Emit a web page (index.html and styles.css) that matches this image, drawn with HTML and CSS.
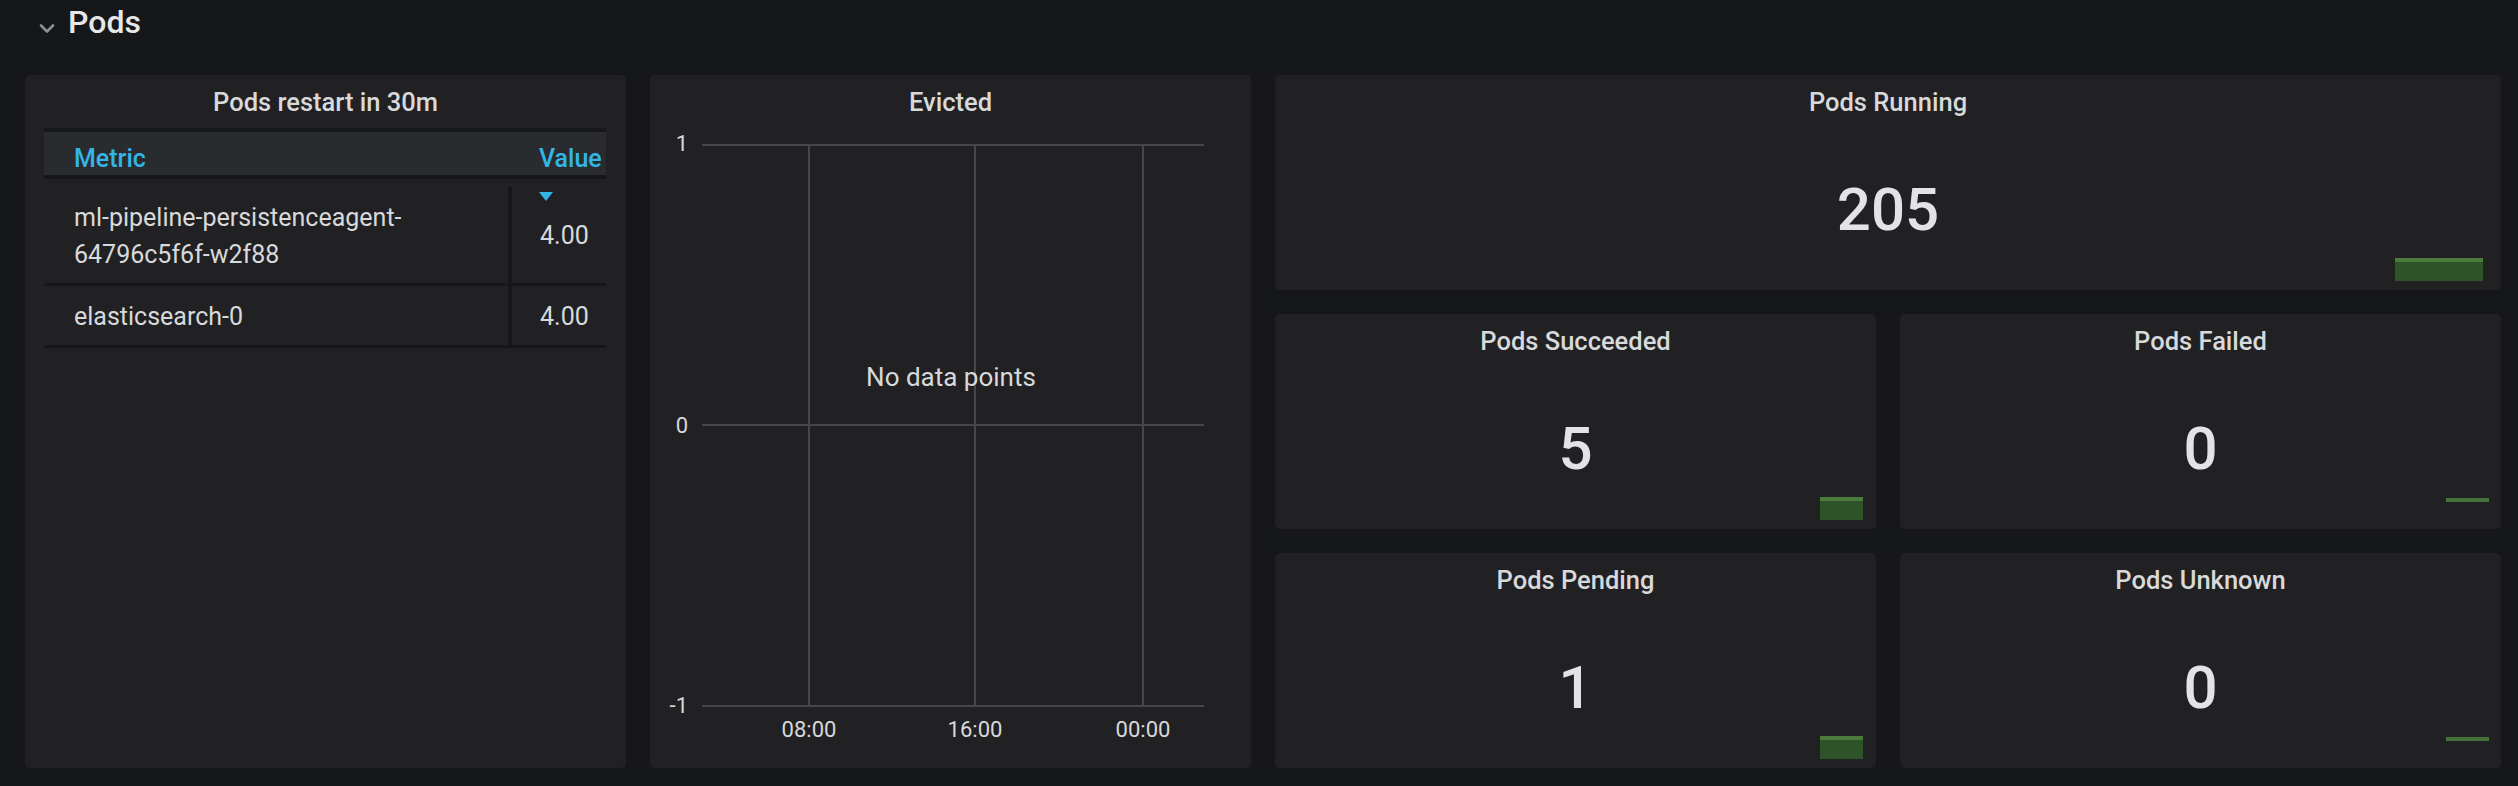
FILE: index.html
```html
<!DOCTYPE html>
<html lang="en">
<head>
<meta charset="utf-8">
<title>Pods</title>
<link rel="stylesheet" href="styles.css">
</head>
<body>
<div class="dash">
  <div class="row-header">
    <svg class="chev" width="16" height="12" viewBox="0 0 16 12"><path d="M2 3.5 L8 9.5 L14 3.5" fill="none" stroke="#8e8f92" stroke-width="2.6" stroke-linecap="round" stroke-linejoin="round"/></svg>
    <span class="row-title">Pods</span>
  </div>
  <div class="grid">
    <section class="panel p-table">
      <div class="panel-title">Pods restart in 30m</div>
      <div class="tbl">
        <div class="thead"><div class="th th-metric">Metric</div><div class="th th-val">Value</div></div>
        <div class="trow"><div class="td td-metric">ml-pipeline-persistenceagent-<wbr>64796c5f6f-w2f88</div><div class="td td-val"><span class="caret"></span>4.00</div></div>
        <div class="trow"><div class="td td-metric">elasticsearch-0</div><div class="td td-val">4.00</div></div>
      </div>
    </section>
    <section class="panel p-graph">
      <div class="panel-title">Evicted</div>
      <svg class="plot" width="601" height="651" viewBox="0 0 601 651">
        <g stroke="#47474b" stroke-width="2" fill="none">
          <path d="M52 28 H554 M52 308 H554 M52 589 H554"/>
          <path d="M159 28 V589 M325 28 V589 M493 28 V589"/>
        </g>
        <g class="axis" text-anchor="end">
          <text x="38" y="34">1</text>
          <text x="38" y="316">0</text>
          <text x="38" y="596">-1</text>
        </g>
        <g class="axis" text-anchor="middle">
          <text x="159" y="620">08:00</text>
          <text x="325" y="620">16:00</text>
          <text x="493" y="620">00:00</text>
        </g>
        <text class="nodata" x="301" y="269" text-anchor="middle">No data points</text>
      </svg>
    </section>
    <section class="panel stat stat-wide">
      <div class="panel-title">Pods Running</div>
      <div class="stat-value">205</div>
      <div class="spark spark-wide"></div>
    </section>
    <section class="panel stat">
      <div class="panel-title">Pods Succeeded</div>
      <div class="stat-value">5</div>
      <div class="spark"></div>
    </section>
    <section class="panel stat">
      <div class="panel-title">Pods Failed</div>
      <div class="stat-value">0</div>
      <div class="spark spark-flat"></div>
    </section>
    <section class="panel stat">
      <div class="panel-title">Pods Pending</div>
      <div class="stat-value">1</div>
      <div class="spark"></div>
    </section>
    <section class="panel stat">
      <div class="panel-title">Pods Unknown</div>
      <div class="stat-value">0</div>
      <div class="spark spark-flat"></div>
    </section>
  </div>
</div>
</body>
</html>
```

FILE: styles.css
```css
* { box-sizing: border-box; }
html, body {
  margin: 0;
  padding: 0;
  background: #161719;
}
body {
  font-family: Roboto, "Liberation Sans", sans-serif;
  color: #d8d9da;
  width: 2518px;
  height: 786px;
  overflow: hidden;
}
.dash { width: 2518px; }

.row-header {
  height: 75px;
  display: flex;
  align-items: flex-start;
  padding: 2px 0 0 39px;
}
.chev { margin-top: 20px; flex: none; }
.row-title {
  margin-left: 13px;
  font-size: 32px;
  line-height: 40px;
  font-weight: 500;
  color: #e6e7e8;
}

.grid {
  display: grid;
  grid-template-columns: repeat(4, 601px);
  grid-template-rows: repeat(3, 215px);
  gap: 24px;
  padding-left: 25px;
}
.panel {
  background: #212124;
  border-radius: 5px;
  position: relative;
  overflow: hidden;
}
.panel-title {
  padding-top: 12px;
  height: 42px;
  font-size: 25.5px;
  line-height: 30px;
  font-weight: 500;
  text-align: center;
  color: #d8d9da;
  white-space: nowrap;
}

.p-table { grid-column: 1; grid-row: 1 / 4; }
.p-graph { grid-column: 2; grid-row: 1 / 4; }
.stat-wide { grid-column: 3 / 5; grid-row: 1; }

/* table */
.tbl {
  margin: 11px 20px 0 19px;
  font-size: 25px;
}
.thead {
  display: grid;
  grid-template-columns: 468px 1fr;
  background: #2a2b2e;
  border-top: 4px solid #161719;
  border-bottom: 4px solid #161719;
  height: 51px;
  margin-bottom: 8px;
}
.th {
  padding-top: 12px;
  line-height: 30px;
  font-weight: 500;
  color: #33b5e5;
  white-space: nowrap;
}
.th-metric { padding-left: 30px; }
.th-val { padding-left: 27px; }
.trow {
  display: grid;
  grid-template-columns: 468px 1fr;
  border-bottom: 3px solid #161719;
}
.td {
  line-height: 37px;
  color: #d8d9da;
}
.td-metric {
  padding: 12px 20px 10px 30px;
  border-right: 4px solid #161719;
}
.td-val {
  position: relative;
  padding-left: 28px;
  align-self: center;
  padding-top: 1px;
}
.caret {
  position: absolute;
  left: 27px;
  top: -24px;
  width: 0;
  height: 0;
  border-left: 7px solid transparent;
  border-right: 7px solid transparent;
  border-top: 9px solid #33b5e5;
}

/* graph */
.plot { display: block; }
.axis {
  font-family: Roboto, "Liberation Sans", sans-serif;
  font-size: 22px;
  fill: #d8d9da;
}
.nodata {
  font-family: Roboto, "Liberation Sans", sans-serif;
  font-size: 26px;
  fill: #d8d9da;
}

/* singlestat */
.stat {
  display: flex;
  flex-direction: column;
  align-items: center;
}
.stat .panel-title { align-self: stretch; }
.stat-value {
  margin-top: 58px;
  font-size: 60px;
  line-height: 70px;
  font-weight: 500;
  color: #e2e3e4;
}
.spark {
  position: absolute;
  right: 13px;
  bottom: 9px;
  width: 43px;
  height: 23px;
  background: #2f5328;
  border-top: 4px solid #4b7c3c;
}
.spark-wide {
  right: 18px;
  width: 88px;
}
.spark-flat {
  right: 12px;
  bottom: 27px;
  height: 4px;
  background: #46703c;
  border-top: none;
}
```
